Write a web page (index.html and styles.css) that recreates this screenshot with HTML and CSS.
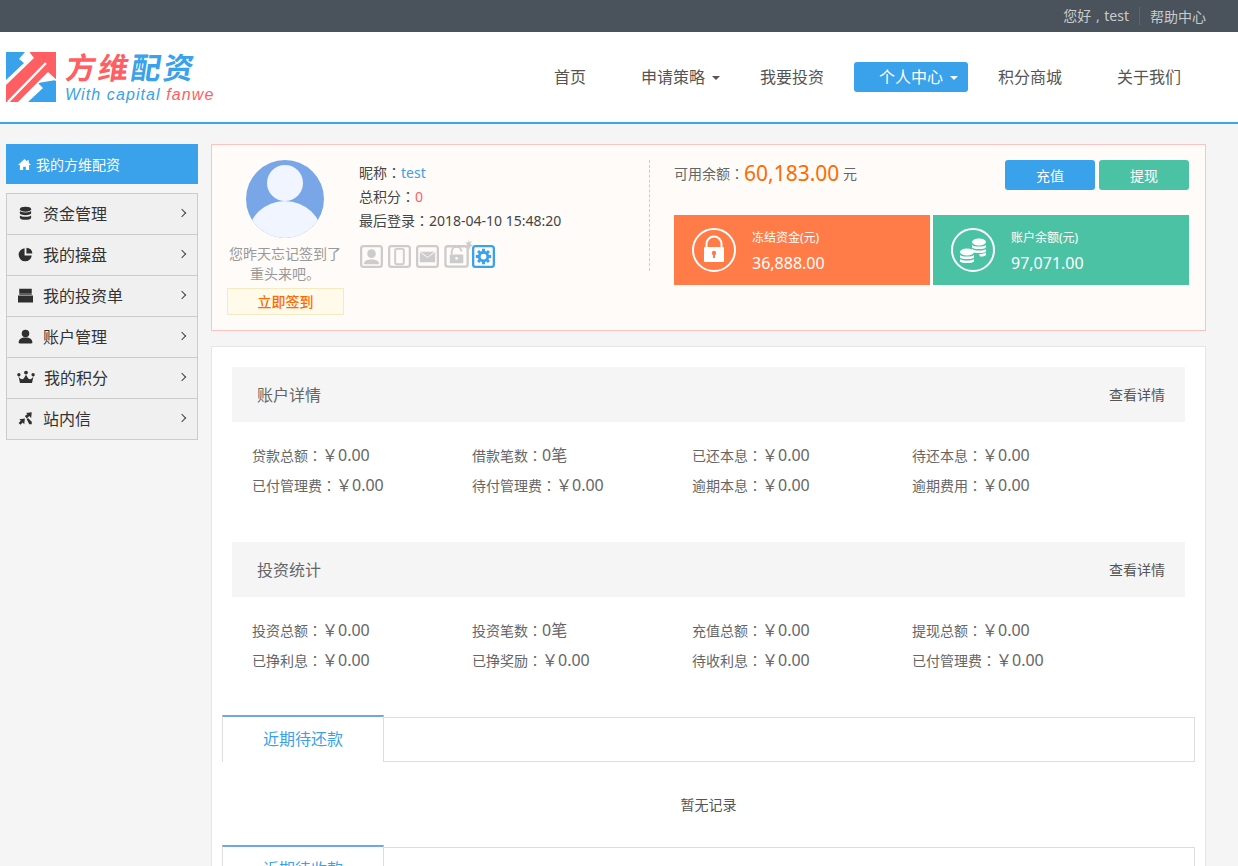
FILE: index.html
```html
<!DOCTYPE html>
<html>

<head>
    <meta charset="UTF-8">
    <title>方维配资 - 个人中心</title>
    <link rel="stylesheet" href="styles.css">
</head>

<body>
    <!-- top strip -->
    <div class="topbar">
        <span class="top-hello">您好 , test</span>
        <span class="top-help">帮助中心</span>
    </div>

    <!-- header -->
    <div class="header">
        <div class="logo">
            <svg class="logo-mark" viewBox="0 0 50 50">
                <polygon fill="#3aa1eb" points="0,0 19,0 13,7 18,11 0,28" />
                <polygon fill="#3aa1eb" points="50,50 22,50 37,36 32,31 50,28" />
                <polygon fill="#ff5e62" stroke="#fff" stroke-width="1.500" points="21,-2 52,-2 52,30 42,21 11,52 -2,52 -2,34 27,6" />
                <line x1="2" y1="50" x2="40" y2="11" stroke="#fff" stroke-width="2.500" />
            </svg>
            <div class="logo-text">
                <div class="logo-cn"><span class="red">方维</span>配资</div>
                <div class="logo-en">With capital <span class="red">fanwe</span></div>
            </div>
        </div>
        <div class="nav">
            <a class="nav-item nav-first">首页</a>
            <a class="nav-item">申请策略<i class="caret"></i></a>
            <a class="nav-item">我要投资</a>
            <a class="nav-item active">个人中心<i class="caret"></i></a>
            <a class="nav-item">积分商城</a>
            <a class="nav-item">关于我们</a>
        </div>
    </div>

    <div class="page">
        <!-- left menu -->
        <div class="side">
            <div class="side-head">
                <svg class="side-home" viewBox="0 0 24 24"><path d="M12 2 0 13h3.500v9h6v-6h5v6h6v-9H24l-4-3.700V4h-3v2.600z" /></svg>
                我的方维配资
            </div>
            <div class="side-list">
                <div class="side-row">
                    <svg class="side-icon" viewBox="0 0 24 24"><ellipse cx="12" cy="5" rx="9" ry="4" /><path d="M3 8c2 3 16 3 18 0v4c-2 3.500-16 3.500-18 0zM3 15c2 3 16 3 18 0v4c-1 4-17 4-18 0z" /></svg>
                    <span>资金管理</span><i class="chev"></i>
                </div>
                <div class="side-row">
                    <svg class="side-icon" viewBox="0 0 24 24"><path d="M10.500 2v11.500H22A10.500 10.500 0 1 1 10.500 2z" /><path d="M13.500 1A9.500 9.500 0 0 1 23 10.500h-9.500z" /></svg>
                    <span>我的操盘</span><i class="chev"></i>
                </div>
                <div class="side-row">
                    <svg class="side-icon" viewBox="0 0 24 24"><path d="M2 1h20v8H2zM0 12h24v11H0zM2 10h20v1H2z" /></svg>
                    <span>我的投资单</span><i class="chev"></i>
                </div>
                <div class="side-row">
                    <svg class="side-icon" viewBox="0 0 24 24"><circle cx="12" cy="7" r="6" /><path d="M1 22c0-6 4-8.500 11-8.500S23 16 23 22c0 .8-1 1-2 1H3c-1 0-2-.2-2-1z" /></svg>
                    <span>账户管理</span><i class="chev"></i>
                </div>
                <div class="side-row">
                    <svg class="side-icon side-crown" viewBox="0 0 24 24"><circle cx="12" cy="6" r="2.500" /><circle cx="2.500" cy="9" r="2.200" /><circle cx="21.500" cy="9" r="2.200" /><path d="M2 11c2 4 5 5 7 3l3-5 3 5c2 2 5 1 7-3l-2 9H4z" /></svg>
                    <span class="crown-label">我的积分</span><i class="chev"></i>
                </div>
                <div class="side-row">
                    <svg class="side-icon" viewBox="0 0 24 24"><path d="m13 3 9-1-1 9-3-3-4 4-3-4 4-3zM2 13l9-1-1 9-2.500-2.500-3.500 3.500-3-3 3.500-3.500zM14 13l2-2 6 6v4h-4z" /></svg>
                    <span>站内信</span><i class="chev"></i>
                </div>
            </div>
        </div>

        <div class="main">
            <!-- user summary -->
            <div class="user-card">
                <div class="user-avatar">
                    <svg class="avatar" viewBox="0 0 78 78">
                        <circle cx="39" cy="39" r="39" fill="#78a6e6" />
                        <clipPath id="avatar-clip"><circle cx="39" cy="39" r="39" /></clipPath>
                        <g fill="#f0f5ff" clip-path="url(#avatar-clip)">
                            <circle cx="39" cy="23" r="18" />
                            <ellipse cx="39" cy="76" rx="37" ry="35" />
                        </g>
                    </svg>
                    <p class="sign-tip">您昨天忘记签到了<br>重头来吧。</p>
                    <a class="sign-btn">立即签到</a>
                </div>
                <div class="user-info">
                    <p>昵称<i class="colon">：</i><span class="blue">test</span></p>
                    <p>总积分<i class="colon">：</i><span class="red">0</span></p>
                    <p>最后登录<i class="colon">：</i>2018-04-10 15:48:20</p>
                    <div class="safe-icons">
                        <svg viewBox="0 0 24 24"><rect x="1.200" y="1.200" width="21.600" height="21.600" rx="2.500" class="safe-box" /><circle cx="12" cy="9" r="4.500" /><path d="M4 20c0-4 4-5 8-5s8 1 8 5z" /></svg>
                        <svg viewBox="0 0 24 24"><rect x="1.200" y="1.200" width="21.600" height="21.600" rx="2.500" class="safe-box" /><rect x="7.500" y="4" width="9" height="16" rx="1.500" class="safe-line" /></svg>
                        <svg viewBox="0 0 24 24"><rect x="1.200" y="1.200" width="21.600" height="21.600" rx="2.500" class="safe-box" /><rect x="4" y="7" width="16" height="11" /><path d="m4 7 8 6 8-6" class="safe-white" /></svg>
                        <svg viewBox="0 0 30 30" class="safe-lock"><rect x="1.500" y="7.500" width="23" height="21" rx="2.500" class="safe-box" /><path d="M8 16v-3a5 5 0 0 1 10 0" class="safe-line" /><rect x="6" y="16" width="14" height="9" rx="1" /><circle cx="13" cy="20" r="1.500" fill="#fffbf8" /><path d="m25 0 1 3 3-1-2 3 3 2-3 1v3l-2-3-3 1 2-3-2-3 3 1z" /></svg>
                        <svg viewBox="0 0 24 24" class="safe-on"><rect x="1.200" y="1.200" width="21.600" height="21.600" rx="2.500" class="safe-box" /><circle cx="12" cy="12" r="4.500" class="safe-gear" /><path d="M12 4v3M12 17v3M4 12h3M17 12h3M6.300 6.300l2.100 2.100M15.600 15.600l2.100 2.100M6.300 17.700l2.100-2.100M15.600 8.400l2.100-2.100" class="safe-teeth" /></svg>
                    </div>
                </div>
                <div class="user-money">
                    <div class="money-top">
                        <div class="money-left">可用余额<i class="colon">：</i><b>60,183.00</b>&nbsp;元</div>
                        <div class="money-btns">
                            <a class="btn btn-blue">充值</a>
                            <a class="btn btn-green">提现</a>
                        </div>
                    </div>
                    <div class="stat-row">
                        <div class="stat stat-orange">
                            <svg class="stat-icon" viewBox="0 0 44 44">
                                <circle cx="22" cy="22" r="21" class="stat-ring" />
                                <path d="M14.500 19v-3a7.500 7.500 0 0 1 15 0v3" class="stat-ring" />
                                <rect x="12" y="19" width="20" height="15" rx="1" fill="#fff" />
                                <circle cx="22" cy="25" r="2.200" fill="#ff7b47" />
                                <rect x="21" y="25" width="2" height="5" fill="#ff7b47" />
                            </svg>
                            <div>
                                <div class="stat-name">冻结资金(元)</div>
                                <div class="stat-num">36,888.00</div>
                            </div>
                        </div>
                        <div class="stat stat-green">
                            <svg class="stat-icon" viewBox="0 0 44 44">
                                <circle cx="22" cy="22" r="21" class="stat-ring" />
                                <g fill="#fff">
                                    <ellipse cx="28" cy="14" rx="7" ry="3.500" />
                                    <path d="M21 17c2 2 12 2 14 0v2.500c-2 2-12 2-14 0zM21 21c2 2 12 2 14 0v2.500c-2 2-12 2-14 0zM28 26c3 0 5-.5 7-1.500V27c-1 1-3 1.500-6 1.600z" />
                                    <ellipse cx="16" cy="24" rx="7" ry="3.500" />
                                    <path d="M9 27c2 2 12 2 14 0v2.500c-2 2-12 2-14 0zM9 31c2 2 12 2 14 0v2.500c-2 2-12 2-14 0z" />
                                </g>
                            </svg>
                            <div>
                                <div class="stat-name">账户余额(元)</div>
                                <div class="stat-num">97,071.00</div>
                            </div>
                        </div>
                    </div>
                </div>
            </div>

            <div class="panel">
                <div class="block">
                    <div class="block-head"><span>账户详情</span><a>查看详情</a></div>
                    <div class="block-grid">
                        <div class="cell">贷款总额<i class="colon">：</i><em>￥0.00</em></div>
                        <div class="cell">借款笔数<i class="colon">：</i><em>0笔</em></div>
                        <div class="cell">已还本息<i class="colon">：</i><em>￥0.00</em></div>
                        <div class="cell">待还本息<i class="colon">：</i><em>￥0.00</em></div>
                        <div class="cell">已付管理费<i class="colon">：</i><em>￥0.00</em></div>
                        <div class="cell">待付管理费<i class="colon">：</i><em>￥0.00</em></div>
                        <div class="cell">逾期本息<i class="colon">：</i><em>￥0.00</em></div>
                        <div class="cell">逾期费用<i class="colon">：</i><em>￥0.00</em></div>
                    </div>
                </div>
                <div class="block">
                    <div class="block-head"><span>投资统计</span><a>查看详情</a></div>
                    <div class="block-grid">
                        <div class="cell">投资总额<i class="colon">：</i><em>￥0.00</em></div>
                        <div class="cell">投资笔数<i class="colon">：</i><em>0笔</em></div>
                        <div class="cell">充值总额<i class="colon">：</i><em>￥0.00</em></div>
                        <div class="cell">提现总额<i class="colon">：</i><em>￥0.00</em></div>
                        <div class="cell">已挣利息<i class="colon">：</i><em>￥0.00</em></div>
                        <div class="cell">已挣奖励<i class="colon">：</i><em>￥0.00</em></div>
                        <div class="cell">待收利息<i class="colon">：</i><em>￥0.00</em></div>
                        <div class="cell">已付管理费<i class="colon">：</i><em>￥0.00</em></div>
                    </div>
                </div>

                <div class="tabs"><div class="tab">近期待还款</div><div class="tab-rest"></div></div>
                <div class="empty">暂无记录</div>
                <div class="tabs"><div class="tab">近期待收款</div><div class="tab-rest"></div></div>
            </div>
        </div>
    </div>
</body>

</html>
```

FILE: styles.css
```css
html,
body {
    margin: 0;
    padding: 0;
    height: 866px;
    overflow: hidden;
    background: #f5f5f5;
    font-family: "Noto Sans", "Noto Sans CJK SC", sans-serif;
    font-size: 14px;
    color: #444;
}

p {
    margin: 0;
}

.red {
    color: #ff5e62;
}

.blue {
    color: #3aa1eb;
}

/* centred full-width colon */
.colon {
    display: inline-block;
    width: 14px;
    line-height: 1;
    font-family: "Noto Sans CJK TC", sans-serif;
    font-style: normal;
}

.topbar {
    height: 32px;
    background: #4a525c;
    color: #c8cbce;
    display: flex;
    justify-content: flex-end;
    align-items: center;
    padding-right: 32px;
}

.top-hello {
    padding-right: 10px;
    border-right: 1px solid #5d646d;
    line-height: 18px;
    word-spacing: 1px;
}

.top-help {
    padding-left: 10px;
}

.header {
    height: 90px;
    background: #fff;
    border-bottom: 2px solid #38a6e6;
    display: flex;
    justify-content: space-between;
    align-items: center;
    padding: 0 32px 0 6px;
}

.logo {
    display: flex;
    gap: 9px;
    height: 50px;
}

.logo-mark {
    width: 50px;
    height: 50px;
    display: block;
}

.logo-cn {
    width: 140px;
    margin-left: 1px;
    font-size: 30px;
    line-height: 32px;
    height: 34px;
    font-weight: bold;
    color: #3aa1eb;
    letter-spacing: 2.500px;
    transform: skewX(-9deg);
}

.logo-en {
    font-family: "Liberation Sans", sans-serif;
    font-size: 16px;
    line-height: 18px;
    font-style: italic;
    color: #3aa1eb;
    letter-spacing: 1.100px;
}

.nav {
    display: flex;
    gap: 5px;
}

.nav-item {
    width: 114px;
    height: 30px;
    line-height: 30px;
    border-radius: 3px;
    font-size: 16px;
    color: #555;
    text-align: center;
    position: relative;
}

.nav-first {
    width: 82px;
}

.nav-item.active {
    background: #3aa1eb;
    color: #fff;
}

.caret {
    position: absolute;
    top: 14px;
    margin-left: 7px;
    border: 4px solid transparent;
    border-top: 4px solid #555;
    border-bottom: 0;
}

.active .caret {
    border-top-color: #fff;
}

.page {
    display: flex;
    gap: 13px;
    padding: 20px 0 0 6px;
    width: 1200px;
}

.side {
    width: 192px;
    flex: none;
}

.side-head {
    height: 39px;
    padding: 1px 0 0 12px;
    line-height: 39px;
    background: #3aa1eb;
    color: #fff;
    font-size: 14px;
    display: flex;
    align-items: center;
    gap: 5px;
}

.side-home {
    width: 13px;
    height: 13px;
    fill: #fff;
}

.side-list {
    margin-top: 9px;
    border: 1px solid #ccc;
    border-bottom: 0;
    background: #f0f0f0;
}

.side-row {
    height: 38px;
    padding: 0 12px 2px 11px;
    border-bottom: 1px solid #ccc;
    display: flex;
    align-items: center;
    font-size: 16px;
    color: #333;
}

.side-icon {
    width: 15px;
    height: 15px;
    fill: #2f2f2f;
    margin-right: 10px;
    flex: none;
}

.side-crown {
    width: 18px;
    height: 18px;
    margin: 0 8px 0 -1px;
}

.crown-label {
    margin-left: 1px;
}

.chev {
    margin-left: auto;
    width: 5px;
    height: 5px;
    border-top: 1.500px solid #444;
    border-right: 1.500px solid #444;
    transform: rotate(45deg);
}

.main {
    width: 995px;
    flex: none;
}

.user-card {
    height: 185px;
    background: #fffbf8;
    border: 1px solid #ffc2be;
    display: flex;
}

.user-avatar {
    width: 147px;
    flex: none;
    text-align: center;
    padding-top: 15px;
}

.avatar {
    display: block;
    width: 78px;
    height: 78px;
    margin: 0 auto 6px 34px;
}

.sign-tip {
    color: #999;
    line-height: 20px;
    margin: 0 0 4px 0;
    position: relative;
    left: -1px;
    width: 148px;
}

.sign-btn {
    display: block;
    width: 115px;
    height: 25px;
    line-height: 25px;
    margin-left: 15px;
    background: #fffaea;
    border: 1px solid #f9e9c0;
    color: #ff6a00;
    font-weight: 500;
}

.user-info {
    width: 290px;
    flex: none;
    margin-top: 15px;
    padding-top: 1px;
    height: 110px;
    border-right: 1px dashed #ccc;
    color: #444;
    line-height: 24px;
}

.user-info p {
    height: 24px;
}

.safe-icons {
    display: flex;
    gap: 5px;
    margin-top: 12px;
    padding-left: 1px;
    align-items: flex-end;
}

.safe-icons svg {
    width: 23px;
    height: 23px;
    fill: #ccc;
}

.safe-icons .safe-lock {
    width: 29px;
    height: 29px;
    margin: -6px -6px 0 0;
}

.safe-box {
    fill: none;
    stroke: #ccc;
    stroke-width: 2.400;
}

.safe-line {
    fill: none;
    stroke: #ccc;
    stroke-width: 2;
}

.safe-white {
    fill: none;
    stroke: #fffbf8;
    stroke-width: 1;
}

.safe-on .safe-box {
    stroke: #3aa1eb;
}

.safe-gear {
    fill: none;
    stroke: #3aa1eb;
    stroke-width: 3;
}

.safe-teeth {
    fill: none;
    stroke: #3aa1eb;
    stroke-width: 3;
}

.user-money {
    flex: 1;
    padding: 15px 16px 0 24px;
}

.money-top {
    display: flex;
    justify-content: space-between;
    height: 55px;
}

.money-left {
    color: #666;
    display: flex;
    align-items: center;
    height: 26px;
}

.money-left b {
    font-size: 21px;
    font-weight: 400;
    color: #ff6a00;
}

.money-btns {
    display: flex;
    gap: 4px;
}

.btn {
    width: 90px;
    height: 30px;
    line-height: 31px;
    border-radius: 3px;
    color: #fff;
    text-align: center;
}

.btn-blue {
    background: #3aa1eb;
}

.btn-green {
    background: #4cc2a5;
}

.stat-row {
    display: flex;
    gap: 3px;
}

.stat {
    flex: 1;
    height: 70px;
    display: flex;
    align-items: center;
    gap: 16px;
    padding-left: 18px;
    color: #fff;
}

.stat-orange {
    background: #ff7b47;
}

.stat-green {
    background: #4cc2a5;
}

.stat-icon {
    width: 44px;
    height: 44px;
    flex: none;
}

.stat-ring {
    fill: none;
    stroke: #fff;
    stroke-width: 2;
}

.stat-name {
    font-size: 12px;
    line-height: 20px;
    margin-top: 5px;
}

.stat-num {
    font-size: 16px;
    line-height: 30px;
}

.panel {
    margin-top: 15px;
    background: #fff;
    border: 1px solid #e5e5e5;
    padding: 20px 20px 0;
}

.block-head {
    height: 53px;
    padding: 0 20px 2px 25px;
    background: #f5f5f5;
    display: flex;
    justify-content: space-between;
    align-items: center;
    font-size: 16px;
    color: #666;
}

.block-head a {
    font-size: 14px;
    color: #555;
}

.block-grid {
    display: grid;
    grid-template-columns: repeat(4, 220px);
    grid-auto-rows: 30px;
    padding: 18px 0 0 20px;
    line-height: 30px;
    height: 60px;
    margin-bottom: 42px;
}

.block:nth-child(2) .block-grid {
    margin-bottom: 40px;
}

.cell {
    font-size: 14px;
    color: #666;
}

.cell em {
    font-size: 16px;
    font-style: normal;
    color: #666;
}

.tabs {
    margin: 0 -10px;
    height: 47px;
    display: flex;
}

.tab {
    width: 162px;
    box-sizing: border-box;
    height: 47px;
    line-height: 44px;
    border-top: 2px solid #6fa8dc;
    border-left: 1px solid #ddd;
    border-right: 1px solid #ddd;
    background: #fff;
    color: #3aa1eb;
    font-size: 16px;
    text-align: center;
}

.tab-rest {
    flex: 1;
    margin-top: 2px;
    border: 1px solid #ddd;
    border-left: 0;
}

.empty {
    height: 83px;
    line-height: 85px;
    text-align: center;
    font-size: 14px;
    color: #555;
}
```
